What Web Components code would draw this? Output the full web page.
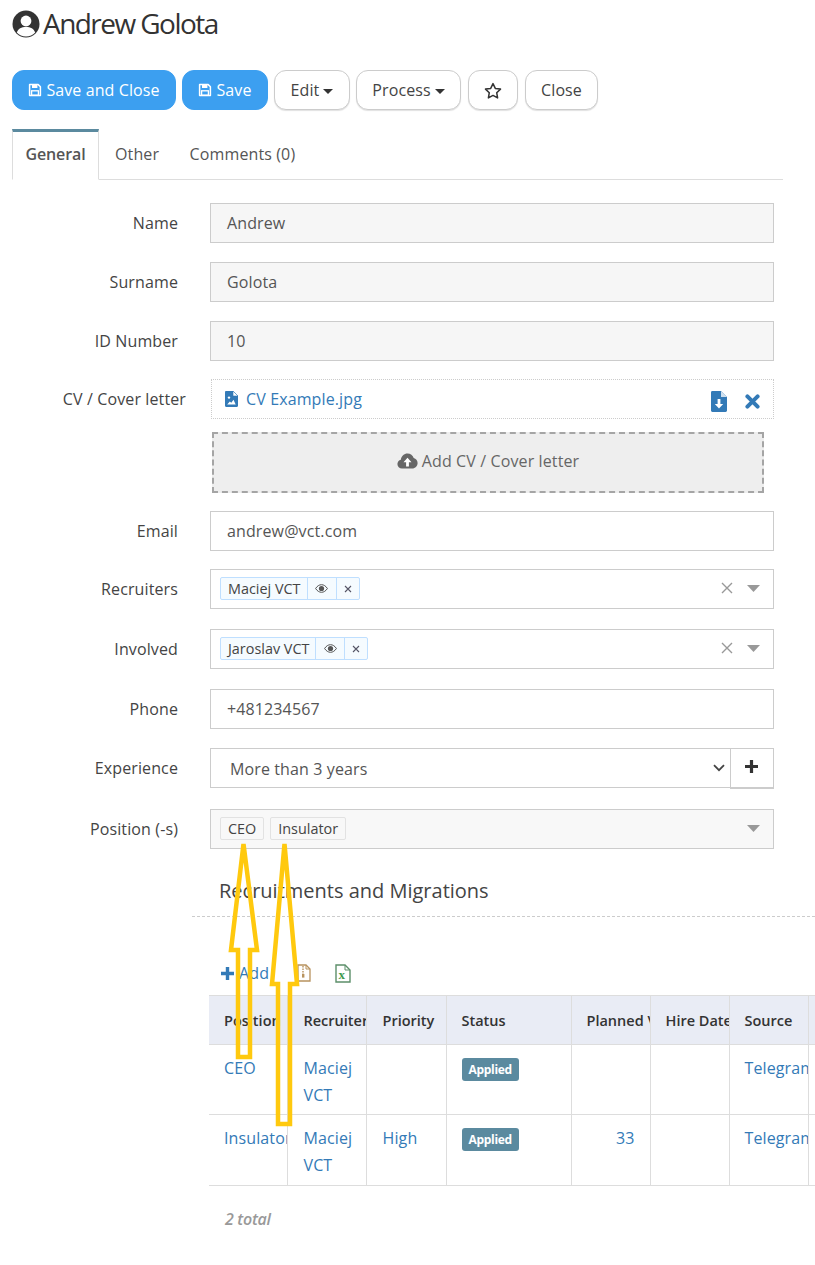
<!DOCTYPE html>
<html lang="en">
<head>
<meta charset="utf-8">
<title>Andrew Golota</title>
<style>
html,body{margin:0;padding:0;background:#fff;overflow:hidden}
body{font-family:"Open Sans","Noto Sans",sans-serif;font-size:16px;letter-spacing:.12px;color:#555;width:815px;height:1265px;position:relative}
</style>
</head>
<body>
<x-title>Andrew Golota</x-title>
<x-toolbar>
  <x-btn primary icon="save" w="164">Save and Close</x-btn>
  <x-btn primary icon="save" w="86">Save</x-btn>
  <x-btn caret w="76">Edit</x-btn>
  <x-btn caret w="105">Process</x-btn>
  <x-btn icon="star" w="50" style="margin-left:1px"></x-btn>
  <x-btn w="73" style="margin-left:1px">Close</x-btn>
</x-toolbar>
<x-tabs><span slot="active">General</span><span>Other</span><span>Comments (0)</span></x-tabs>
<x-form>
  <x-row label="Name" gap="19"><x-field readonly>Andrew</x-field></x-row>
  <x-row label="Surname" gap="19"><x-field readonly>Golota</x-field></x-row>
  <x-row label="ID Number" gap="18"><x-field readonly>10</x-field></x-row>
  <x-row label="CV / Cover letter" wide gap="13"><x-file>CV Example.jpg</x-file></x-row>
  <x-row gap="18"><x-drop>Add CV / Cover letter</x-drop></x-row>
  <x-row label="Email" gap="18"><x-field>andrew@vct.com</x-field></x-row>
  <x-row label="Recruiters" gap="20"><x-multi clear><x-chip>Maciej VCT</x-chip></x-multi></x-row>
  <x-row label="Involved" gap="20"><x-multi clear><x-chip>Jaroslav VCT</x-chip></x-multi></x-row>
  <x-row label="Phone" gap="19"><x-field>+481234567</x-field></x-row>
  <x-row label="Experience" gap="21"><x-select>More than 3 years</x-select></x-row>
  <x-row label="Position (-s)" gap="0"><x-multi readonly><x-pill>CEO</x-pill><x-pill>Insulator</x-pill></x-multi></x-row>
</x-form>
<x-section heading="Recruitments and Migrations"></x-section>
<x-table></x-table>
<x-arrows></x-arrows>

<script>
const ICONS={
save:'<svg width="14" height="14" viewBox="0 0 14 14" fill="none"><path d="M1.6 1.6h8.6l2.2 2.2v8.6H1.6z" fill="none" stroke="currentColor" stroke-width="1.5" stroke-linejoin="round"/><rect x="4" y="1.4" width="5.4" height="3.6" fill="currentColor"/><rect x="3.6" y="7.8" width="6.8" height="4.4" fill="none" stroke="currentColor" stroke-width="1.3"/></svg>',
star:'<svg width="18" height="17" viewBox="0 0 18 17"><path d="M9 1.6l2.3 4.8 5.2.7-3.8 3.6.9 5.2L9 13.4l-4.6 2.5.9-5.2-3.8-3.6 5.2-.7z" fill="none" stroke="#333" stroke-width="1.5" stroke-linejoin="round"/></svg>'
};
function def(name,css,render){
  customElements.define(name,class extends HTMLElement{
    connectedCallback(){
      if(this.shadowRoot)return;
      const r=this.attachShadow({mode:'open'});
      r.innerHTML='<style>'+css+'</style>'+render(this);
    }
  });
}
def('x-title',`:host{display:flex;align-items:center;gap:3px;height:47px;padding-left:12px;font-size:28px;letter-spacing:-1.55px;color:#333;line-height:47px}`,
()=>`<svg width="28" height="28" viewBox="0 0 28 28"><circle cx="14" cy="14" r="13.5" fill="#333"/><circle cx="14" cy="11" r="5.4" fill="#fff"/><path d="M4.8 22.6c1.4-4 4.6-5.6 9.2-5.6s7.8 1.6 9.2 5.6c-2.4 2.6-5.6 4-9.2 4s-6.8-1.4-9.2-4z" fill="#fff"/></svg><slot></slot>`);
def('x-toolbar',`:host{display:flex;gap:6px;padding:23px 0 0 12px;height:40px}`,()=>`<slot></slot>`);
def('x-btn',`:host{display:inline-flex;box-sizing:border-box;height:40px;align-items:center;justify-content:center;gap:4px;border-radius:12px;font-size:16px;letter-spacing:.1px;border:1px solid #ccc;background:#fff;color:#444;box-shadow:0 1px 1px rgba(0,0,0,.12)}
:host([primary]){background:#3c9ff0;border-color:#3c9ff0;color:#fff;box-shadow:none}
svg{display:block}.c{width:0;height:0;border:5px solid transparent;border-top-color:#333;border-bottom:0;margin-left:0;margin-top:2px}`,
e=>{e.style.width=e.getAttribute('w')+'px';const i=e.getAttribute('icon');return (i?ICONS[i]:'')+'<slot></slot>'+(e.hasAttribute('caret')?'<span class="c"></span>':'')});
def('x-tabs',`:host{display:flex;box-sizing:border-box;margin:19px 0 0 12px;width:771px;height:51px;border-bottom:1px solid #ddd;align-items:stretch}
.a{display:flex;align-items:center;box-sizing:border-box;height:51px;width:87px;justify-content:center;border:1px solid #ddd;border-top:3px solid #5b8a9f;border-bottom:1px solid #fff;font-weight:600;color:#555;letter-spacing:-.1px;padding-bottom:4px}
.r{display:flex;align-items:center;gap:30.5px;padding-left:16px;color:#555}`,
()=>`<div class="a"><slot name="active"></slot></div><div class="r"><slot></slot></div>`);
def('x-form',`:host{display:block;margin-top:23px;width:774px}`,()=>`<slot></slot>`);
def('x-row',`:host{display:grid;grid-template-columns:210px 564px}
.l{text-align:right;padding-right:32px;line-height:40px;color:#444}
:host([wide]) .l{padding-right:24px}`,
e=>{e.style.marginBottom=(e.getAttribute('gap')||0)+'px';return `<div class="l">${e.getAttribute('label')||''}</div><div><slot></slot></div>`});
def('x-field',`:host{display:block;box-sizing:border-box;height:40px;border:1px solid #ccc;padding:0 16px;line-height:38px;color:#555;background:#fff}
:host([readonly]){background:#f6f6f6}`,()=>`<slot></slot>`);
def('x-file',`:host{display:flex;box-sizing:border-box;height:40px;align-items:center;border:1px dotted #ccc;padding:0 13px 0 13px;color:#337ab7;margin-left:1px;gap:8px}
.n{flex:1;margin-top:-1px}.i{display:flex;align-items:center;gap:18px;margin-top:5px}svg{display:block}`,
()=>`<svg width="13" height="16" viewBox="0 0 13 16"><path d="M0 1.2C0 .5.5 0 1.2 0H8l5 5v9.8c0 .7-.5 1.2-1.2 1.2H1.2C.5 16 0 15.5 0 14.8z" fill="#337ab7"/><path d="M8 0v5h5z" fill="#fff" stroke="#337ab7" stroke-width=".6"/><circle cx="4" cy="6.6" r="1.2" fill="#fff"/><path d="M2.2 13.4l2.6-3 1.5 1.4 2.2-3 2.2 4.6z" fill="#fff"/></svg>
<span class="n"><slot></slot></span>
<span class="i"><svg width="16" height="21" viewBox="0 0 16 21"><path d="M0 1.4C0 .6.6 0 1.4 0H10l6 6v13.6c0 .8-.6 1.4-1.4 1.4H1.4C.6 21 0 20.4 0 19.6z" fill="#337ab7"/><path d="M10 0v6h6z" fill="#cfe0ef"/><path d="M6.6 8h2.8v5h2.800L8 17.600 3.800 13h2.800z" fill="#fff"/></svg>
<svg width="15" height="15" viewBox="0 0 15 15"><path d="M2.400 2.400l10.200 10.200M12.600 2.400L2.400 12.600" stroke="#337ab7" stroke-width="4" stroke-linecap="round"/></svg></span>`);
def('x-drop',`:host{display:flex;box-sizing:border-box;width:552px;height:61px;margin-left:2px;border:2px dashed #a5a5a5;background:#eee;align-items:center;justify-content:center;gap:4px;color:#666;padding-bottom:4px}svg{display:block}`,
()=>`<svg width="21" height="16" viewBox="0 0 21 16"><path d="M5 15.600c-2.600 0-4.600-2-4.600-4.500 0-2.100 1.400-3.900 3.400-4.400C4.300 3.100 7.100.4 10.500.4c2.900 0 5.400 1.900 6.200 4.600 2.200.6 3.900 2.700 3.900 5.100 0 3-2.400 5.500-5.400 5.500z" fill="#666"/><path d="M10.500 4.800l4 4.400h-2.600v4.400H9.100V9.200H6.500z" fill="#fff"/></svg><slot></slot>`);
def('x-multi',`:host{display:flex;box-sizing:border-box;height:40px;border:1px solid #ccc;align-items:center;padding:0 13px 0 9px;background:#fff}
:host([readonly]){background:#f8f8f8}
.s{display:flex;gap:6px;flex:1;margin-top:-1px}.i{display:flex;align-items:center;gap:14px;margin-top:-2px}svg{display:block}`,
e=>`<div class="s"><slot></slot></div><div class="i">${e.hasAttribute('clear')?'<svg width="12" height="12" viewBox="0 0 12 12"><path d="M1 1l10 10M11 1L1 11" stroke="#999" stroke-width="1.400"/></svg>':''}<svg width="13" height="7" viewBox="0 0 13 7"><path d="M0 0h13L6.500 7z" fill="#999"/></svg></div>`);
def('x-chip',`:host{display:inline-flex;box-sizing:border-box;height:23px;border:1px solid #bfdfff;border-radius:2px;background:#f5fbff;font-size:14.4px;letter-spacing:0;color:#444;align-items:center}
.t{padding:0 6px 0 7px;line-height:21px}.b{display:flex;align-items:center;justify-content:center;height:21px;border-left:1px solid #bfdfff}svg{display:block}`,
()=>`<span class="t"><slot></slot></span><span class="b" style="width:28px"><svg width="13" height="9" viewBox="0 0 13 9"><path d="M.6 4.500C2.200 2 4.200.7 6.500.7s4.300 1.300 5.900 3.800c-1.600 2.500-3.600 3.800-5.900 3.800S2.200 7 .6 4.500z" fill="none" stroke="#555" stroke-width="1"/><circle cx="6.500" cy="4.500" r="2.600" fill="#555"/></svg></span><span class="b" style="width:22px"><svg width="8" height="8" viewBox="0 0 8 8"><path d="M1 1l6 6M7 1L1 7" stroke="#556" stroke-width="1.100"/></svg></span>`);
def('x-pill',`:host{display:inline-block;box-sizing:border-box;height:23px;border:1px solid #e2e2e2;border-radius:2px;background:#f8f8f8;font-size:14.4px;letter-spacing:0;line-height:21px;padding:0 7px;color:#444}`,()=>`<slot></slot>`);
def('x-select',`:host{display:flex;height:40px}
.m{box-sizing:border-box;width:521px;height:40px;border:1px solid #ccc;display:flex;align-items:center;justify-content:space-between;padding:2px 5px 0 19px;color:#555}
svg.ch{margin-top:-2px}
.p{box-sizing:border-box;width:44px;height:41px;margin-left:-1px;border:1px solid #ccc;border-bottom-width:2px;background:#fff;display:flex;align-items:center;justify-content:center;padding:0 2px 3px 0}svg{display:block}`,
()=>`<div class="m"><slot></slot><svg class="ch" width="12" height="8" viewBox="0 0 12 8"><path d="M1 1.200l5 5 5-5" fill="none" stroke="#444" stroke-width="1.800"/></svg></div><div class="p"><svg width="13" height="13" viewBox="0 0 13 13"><path d="M6.500 0v13M0 6.500h13" stroke="#333" stroke-width="3.200"/></svg></div>`);
def('x-section',`:host{display:block;margin:26px 0 0 192px;width:623px}
h2{margin:0 0 0 27px;font-size:20px;font-weight:400;letter-spacing:0;color:#444;line-height:32px}
.d{border-top:1px dashed #ccc;margin-top:9px}
.a{display:flex;align-items:center;margin:43px 0 0 29px;height:26px;color:#337ab7}
svg{display:block}`,
e=>`<h2>${e.getAttribute('heading')}</h2><div class="d"></div>
<div class="a"><svg width="13" height="13" viewBox="0 0 13 13"><path d="M6.500 0v13M0 6.500h13" stroke="#337ab7" stroke-width="3.400"/></svg><span style="margin-left:5px;width:58px">Add</span>
<svg width="14" height="18" viewBox="0 0 14 18"><path d="M1 1h8l4 4v12H1z" fill="#fff" stroke="#b8935f" stroke-width="1.300"/><path d="M9 1v4h4" fill="none" stroke="#b8935f"/><path d="M6 2v8" stroke="#b8935f" stroke-width="1.400" stroke-dasharray="1.500 1"/><rect x="5" y="10" width="2.400" height="3.600" fill="#b8935f"/></svg>
<svg width="16" height="19" viewBox="0 0 16 19" style="margin-left:24px"><path d="M1 1h9l5 5v12H1z" fill="#fff" stroke="#5c8f6a" stroke-width="1.400"/><path d="M10 1v5h5" fill="none" stroke="#5c8f6a"/></svg><span style="font:bold 13px 'Liberation Serif',serif;color:#3d9a4c;margin-left:-12.500px;margin-top:4px">x</span></div>`);
def('x-table',`:host{display:block;margin:9px 0 0 209px;width:606px;overflow:hidden}
table{border-collapse:collapse;table-layout:fixed;width:760px}
th,td{border:1px solid #ddd;overflow:hidden;padding:0 0 0 15px;vertical-align:top;text-align:left;font-weight:400;line-height:26.500px;box-sizing:border-box}
tr>:first-child{border-left:0}
tr>:nth-child(2),tr>:nth-child(3){padding-left:16px}
th{background:#e9ecf5;color:#333;font-weight:600;font-size:14.500px;letter-spacing:0;white-space:nowrap;height:49px;vertical-align:middle;padding-top:2px}
td{color:#337ab7;padding-top:10px}
tr.one td{height:70px}tr.two td{height:71px}
.n{text-align:right;padding-right:15px}
.nw{white-space:nowrap}
.b{display:inline-block;background:#5b8a9f;color:#fff;font-size:12px;font-weight:700;line-height:23px;height:23px;padding:0 7px;border-radius:3px;letter-spacing:-.3px;vertical-align:top;margin-top:3px}
.t{padding:20px 0 0 16px;font-style:italic;font-weight:600;color:#999;line-height:26px;letter-spacing:-.3px}`,
()=>`<table><colgroup><col style="width:78px"><col style="width:79px"><col style="width:80px"><col style="width:125px"><col style="width:79px"><col style="width:79px"><col style="width:79px"><col></colgroup>
<thead><tr><th>Position</th><th>Recruiter</th><th>Priority</th><th>Status</th><th>Planned Value</th><th>Hire Date</th><th>Source</th><th></th></tr></thead>
<tbody><tr class="one"><td class="nw">CEO</td><td>Maciej VCT</td><td></td><td><span class="b">Applied</span></td><td></td><td></td><td class="nw">Telegram</td><td></td></tr>
<tr class="two"><td class="nw">Insulator</td><td>Maciej VCT</td><td>High</td><td><span class="b">Applied</span></td><td class="n">33</td><td></td><td class="nw">Telegram</td><td></td></tr></tbody></table>
<div class="t">2 total</div>`);
def('x-arrows',`:host{position:absolute;left:0;top:0;width:815px;height:1265px;pointer-events:none}svg{display:block}`,
()=>`<svg width="815" height="1265" viewBox="0 0 815 1265"><g fill="none" stroke="#ffc90e" stroke-width="4.500" stroke-linejoin="miter">
<path d="M243.500 844 L257 950 H250 V1057 H238 V950 H231 Z"/>
<path d="M284.500 844 L297 984 H290 V1124 H278 V984 H272 Z"/></g></svg>`);
</script>
</body>
</html>
